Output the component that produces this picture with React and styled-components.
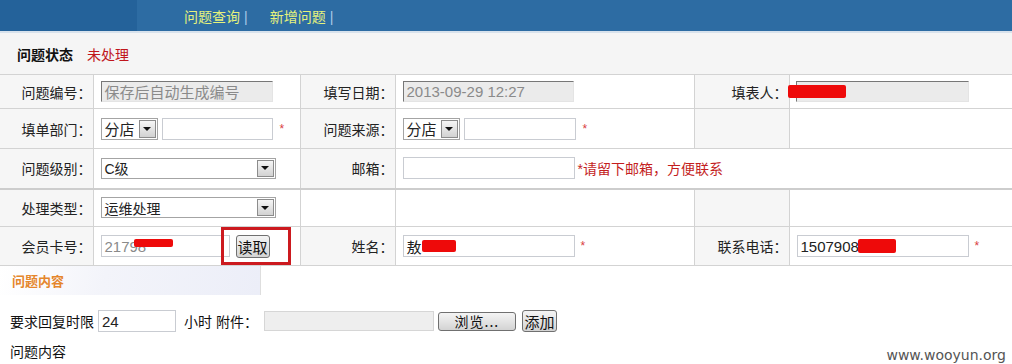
import React from 'react';
import styled, { createGlobalStyle } from 'styled-components';

const GlobalStyle = createGlobalStyle`
  html, body { margin: 0; padding: 0; background: #fff; }
  body {
    font-family: "Liberation Sans", "Noto Sans CJK SC", sans-serif;
    font-size: 13px;
    color: #222;
  }
`;

const Page = styled.div`
  width: 1012px;
  height: 364px;
  position: relative;
  overflow: hidden;
  background: #fff;
`;

const TopBar = styled.div`
  display: flex;
  height: 31px;
  background: #2d6ca3;
  border-bottom: 2px solid #d8e2ec;
`;

const TopLeft = styled.div`
  width: 137px;
  background: #24629a;
`;

const Nav = styled.nav`
  display: flex;
  align-items: center;
  padding-left: 47px;
  gap: 22px;
`;

const NavLink = styled.a`
  color: #e6f27c;
  font-size: 14px;
  text-decoration: none;
  &::after {
    content: "|";
    color: #a9cbe8;
    margin-left: 4px;
  }
`;

const StatusBar = styled.div`
  display: flex;
  align-items: center;
  height: 41px;
  padding-left: 17px;
  background: #f5f5f5;
  gap: 14px;
  font-size: 14px;
  b { color: #111; }
  span { color: #c0161c; }
`;

const Grid = styled.table`
  width: 1012px;
  table-layout: fixed;
  border-collapse: collapse;
  col:nth-child(1) { width: 93px; }
  col:nth-child(2) { width: 207px; }
  col:nth-child(3) { width: 95px; }
  col:nth-child(4) { width: 299px; }
  col:nth-child(5) { width: 95px; }
  col:nth-child(6) { width: 223px; }
`;

const Row = styled.tr`
  height: ${p => p.$h}px;
  td { border-top: ${p => (p.$thick ? '2px solid #cdcdcd' : '1px solid #d3d3d3')}; }
`;

const Cell = styled.td`
  border: 1px solid #d3d3d3;
  padding: 0;
  vertical-align: middle;
  position: relative;
  &:first-child { border-left: none; }
  &:last-child { border-right: none; }
`;

const Label = styled(Cell)`
  background: ${p => (p.$blank ? '#fff' : '#f6f6f6')};
  text-align: right;
  padding-right: 1px;
  font-size: 14px;
  color: #222;
`;

const Value = styled(Cell)`
  background: #fff;
  padding-left: ${p => p.$pad ?? 7}px;
`;

const Field = styled.div`
  display: flex;
  align-items: center;
  gap: ${p => p.$gap ?? 4}px;
`;

const TextBox = styled.div`
  box-sizing: border-box;
  width: ${p => p.$w}px;
  height: ${p => p.$h ?? 22}px;
  position: relative;
  display: flex;
  align-items: center;
  padding-left: 3px;
  font-size: 15px;
  color: ${p => (p.$muted ? '#8a8a8a' : '#222')};
  background: ${p => (p.$readonly ? '#ebebeb' : '#fff')};
  border: 1px solid #c9ccd2;
  ${p => p.$readonly && `
    border-top: 1px solid #777;
    border-left: 1px solid #777;
    border-right: 1px solid #e4e4e4;
    border-bottom: 1px solid #e4e4e4;
  `}
  white-space: nowrap;
  overflow: hidden;
`;

const Select = styled.div`
  box-sizing: border-box;
  width: ${p => p.$w}px;
  height: ${p => p.$h ?? 22}px;
  display: flex;
  align-items: center;
  justify-content: space-between;
  border: 1px solid #a4a4a4;
  background: #fff;
  padding-left: 3px;
  font-size: ${p => p.$fs ?? 14}px;
  color: #222;
`;

const Arrow = styled.span`
  box-sizing: border-box;
  width: 17px;
  height: calc(100% - 2px);
  margin-right: 1px;
  border: 1px solid #8c8c8c;
  background: linear-gradient(#f6f6f6, #d2d2d2);
  display: flex;
  align-items: center;
  justify-content: center;
  &::before {
    content: "";
    border-left: 4px solid transparent;
    border-right: 4px solid transparent;
    border-top: 4px solid #111;
  }
`;

const Star = styled.span`
  color: #d94040;
  font-size: 12px;
  margin-left: ${p => p.$ml ?? 3}px;
`;

const Hint = styled.span`
  color: #c41e1e;
  font-size: 14px;
`;

const Button = styled.button`
  box-sizing: border-box;
  width: ${p => p.$w}px;
  height: ${p => p.$h ?? 22}px;
  padding: 0;
  border: 1px solid #707070;
  border-radius: 3px;
  background: linear-gradient(#f4f4f4 0%, #e4e4e4 50%, #d3d3d3 100%);
  font-family: "Noto Sans CJK SC", sans-serif;
  font-size: ${p => p.$fs ?? 15}px;
  color: #111;
  letter-spacing: ${p => p.$ls ?? 0}px;
  line-height: 1;
`;

const Redact = styled.span`
  position: absolute;
  left: ${p => p.$x}px;
  top: ${p => p.$y}px;
  width: ${p => p.$w}px;
  height: ${p => p.$h}px;
  background: #ee0a0a;
  border-radius: 2px;
`;

const Highlight = styled.div`
  position: absolute;
  left: 127px;
  top: 0;
  width: 70px;
  height: 38px;
  box-sizing: border-box;
  border: 3px solid #cc1a1f;
  pointer-events: none;
`;

const SectionTab = styled.div`
  width: 261px;
  height: 29px;
  box-sizing: border-box;
  border-right: 1px solid #dedede;
  background: linear-gradient(100deg, #ffffff 0%, #f3f4fa 40%, #eceef8 100%);
  display: flex;
  align-items: center;
  padding-left: 12px;
  color: #e5862c;
  font-weight: bold;
  font-size: 13px;
`;

const FormLine = styled.div`
  display: flex;
  align-items: center;
  height: 22px;
  margin-top: ${p => p.$mt ?? 0}px;
  padding-left: 10px;
  font-size: 14px;
  color: #111;
`;

const FileBox = styled.div`
  width: 170px;
  height: 20px;
  box-sizing: border-box;
  border: 1px solid #d6d6d6;
  background: #eeeeee;
  margin: 0 4px 0 6px;
`;

const Watermark = styled.div`
  position: absolute;
  right: 4px;
  bottom: 1px;
  font-family: "DejaVu Sans", sans-serif;
  font-size: 14px;
  color: #555;
  background: #fff;
  padding: 0 2px;
`;

function Dropdown({ w, h, fs, children }) {
  return (
    <Select $w={w} $h={h} $fs={fs}>
      <span>{children}</span>
      <Arrow />
    </Select>
  );
}

export default function App() {
  return (
    <Page>
      <GlobalStyle />
      <TopBar>
        <TopLeft />
        <Nav>
          <NavLink>问题查询</NavLink>
          <NavLink>新增问题</NavLink>
        </Nav>
      </TopBar>

      <StatusBar>
        <b>问题状态</b>
        <span>未处理</span>
      </StatusBar>

      <Grid>
        <colgroup>
          <col /><col /><col /><col /><col /><col />
        </colgroup>
        <tbody>
          <Row $h={34}>
            <Label>问题编号：</Label>
            <Value>
              <TextBox $w={172} $h={21} $readonly $muted>保存后自动生成编号</TextBox>
            </Value>
            <Label>填写日期：</Label>
            <Value>
              <TextBox $w={171} $h={21} $readonly $muted>2013-09-29 12:27</TextBox>
            </Value>
            <Label>填表人：</Label>
            <Value $pad={6}>
              <TextBox $w={173} $h={21} $readonly />
              <Redact $x={-2} $y={10} $w={58} $h={13} />
            </Value>
          </Row>

          <Row $h={40}>
            <Label>填单部门：</Label>
            <Value>
              <Field>
                <Dropdown w={57} fs={15}>分店</Dropdown>
                <TextBox $w={111} />
                <Star $ml={3}>*</Star>
              </Field>
            </Value>
            <Label>问题来源：</Label>
            <Value>
              <Field>
                <Dropdown w={57} fs={15}>分店</Dropdown>
                <TextBox $w={112} />
                <Star $ml={3}>*</Star>
              </Field>
            </Value>
            <Label />
            <Value />
          </Row>

          <Row $h={40}>
            <Label>问题级别：</Label>
            <Value>
              <Dropdown w={175} h={21}>C级</Dropdown>
            </Value>
            <Label>邮箱：</Label>
            <Value colSpan={3}>
              <Field $gap={3}>
                <TextBox $w={172} />
                <Hint>*请留下邮箱，方便联系</Hint>
              </Field>
            </Value>
          </Row>

          <Row $h={38} $thick>
            <Label>处理类型：</Label>
            <Value>
              <Dropdown w={175} h={21}>运维处理</Dropdown>
            </Value>
            <Label $blank />
            <Value />
            <Label />
            <Value />
          </Row>

          <Row $h={39}>
            <Label>会员卡号：</Label>
            <Value>
              <Field $gap={6}>
                <TextBox $w={129} $muted>
                  21798
                  <Redact $x={32} $y={3} $w={39} $h={8} />
                </TextBox>
                <Button $w={34} $h={23}>读取</Button>
              </Field>
              <Highlight />
            </Value>
            <Label>姓名：</Label>
            <Value>
              <Field $gap={3}>
                <TextBox $w={172}>
                  敖
                  <Redact $x={18} $y={4} $w={34} $h={12} />
                </TextBox>
                <Star>*</Star>
              </Field>
            </Value>
            <Label>联系电话：</Label>
            <Value>
              <Field $gap={3}>
                <TextBox $w={172}>
                  1507908
                  <Redact $x={60} $y={3} $w={38} $h={14} />
                </TextBox>
                <Star>*</Star>
              </Field>
            </Value>
          </Row>
        </tbody>
      </Grid>

      <SectionTab>问题内容</SectionTab>

      <FormLine $mt={15}>
        要求回复时限
        <TextBox $w={78} $h={22} style={{ marginLeft: 4, marginRight: 8 }}>24</TextBox>
        小时 附件：
        <FileBox />
        <Button $w={78} $h={19} $fs={14} $ls={1}>浏览...</Button>
        <Button $w={35} $h={22} $fs={15} style={{ marginLeft: 6 }}>添加</Button>
      </FormLine>

      <FormLine $mt={8}>问题内容</FormLine>

      <Watermark>www.wooyun.org</Watermark>
    </Page>
  );
}
